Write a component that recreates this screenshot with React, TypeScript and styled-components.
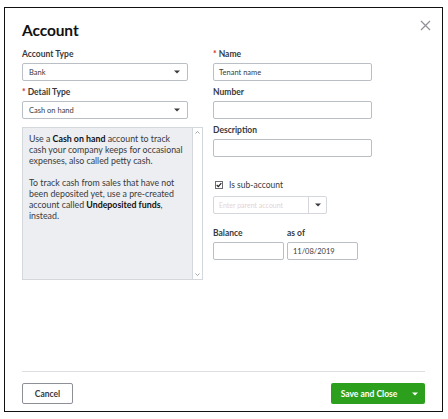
import styled, { createGlobalStyle } from 'styled-components'

const GlobalStyle = createGlobalStyle`
  html, body {
    margin: 0;
    padding: 0;
    background: #ffffff;
  }
  body {
    font-family: Lato, 'Open Sans', 'Liberation Sans', sans-serif;
    color: #393a3d;
  }
`

function Caret() {
  return (
    <svg width="6" height="4" viewBox="0 0 6 4">
      <path d="M0 0.5 H6 L3 3.5 Z" fill="currentColor" />
    </svg>
  )
}

export default function App() {
  return (
    <>
      <GlobalStyle />
      <Frame>
        <Header>
          <Title>Account</Title>
          <CloseButton aria-label="Close">
            <svg width="11" height="11" viewBox="0 0 11 11">
              <path d="M1 1 L10 10 M10 1 L1 10" stroke="#8d9096" strokeWidth="1.2" />
            </svg>
          </CloseButton>
        </Header>
        <Columns>
          <Column>
            <Field>
              <Label>Account Type</Label>
              <Select>
                <span>Bank</span>
                <Caret />
              </Select>
            </Field>
            <Field>
              <Label required>Detail Type</Label>
              <Select>
                <span>Cash on hand</span>
                <Caret />
              </Select>
            </Field>
            <InfoBox>
              <InfoText>
                <p>
                  Use a <b>Cash on hand</b> account to track cash your company keeps for
                  occasional expenses, also called petty cash.
                </p>
                <p>
                  To track cash from sales that have not been deposited yet, use a pre-created
                  account called <b>Undeposited funds</b>, instead.
                </p>
              </InfoText>
              <Scrollbar>
                <ScrollArrow>
                  <svg width="5" height="3" viewBox="0 0 5 3">
                    <path d="M0.5 2.5 L2.5 0.5 L4.5 2.5" stroke="#8d9096" fill="none" strokeWidth="0.8" />
                  </svg>
                </ScrollArrow>
                <ScrollArrow>
                  <svg width="5" height="3" viewBox="0 0 5 3">
                    <path d="M0.5 0.5 L2.5 2.5 L4.5 0.5" stroke="#8d9096" fill="none" strokeWidth="0.8" />
                  </svg>
                </ScrollArrow>
              </Scrollbar>
            </InfoBox>
          </Column>
          <Column>
            <Field>
              <Label required>Name</Label>
              <Input width={159}>Tenant name</Input>
            </Field>
            <Field>
              <Label>Number</Label>
              <Input width={159} />
            </Field>
            <Field>
              <Label>Description</Label>
              <Input width={159} />
            </Field>
            <CheckRow>
              <CheckBox>
                <svg width="7" height="6" viewBox="0 0 7 6">
                  <path d="M0.8 3 L2.7 5 L6.2 0.8" stroke="#222" fill="none" strokeWidth="1.4" />
                </svg>
              </CheckBox>
              <CheckLabel>Is sub-account</CheckLabel>
            </CheckRow>
            <Combo>
              <ComboInput>Enter parent account</ComboInput>
              <ComboButton>
                <Caret />
              </ComboButton>
            </Combo>
            <BalanceRow>
              <Field>
                <Label>Balance</Label>
                <Input width={71} />
              </Field>
              <Field>
                <Label>as of</Label>
                <Input width={71}>11/08/2019</Input>
              </Field>
            </BalanceRow>
          </Column>
        </Columns>
        <Footer>
          <CancelButton>Cancel</CancelButton>
          <SaveButton>
            <SaveLabel>Save and Close</SaveLabel>
            <SaveCaret>
              <Caret />
            </SaveCaret>
          </SaveButton>
        </Footer>
      </Frame>
    </>
  )
}

const Frame = styled.div`
  box-sizing: border-box;
  margin: 7px 5px 0 4px;
  height: 405px;
  border: 1.5px solid #111;
  padding: 13px 17px 0 17px;
  display: flex;
  flex-direction: column;
`

const Header = styled.header`
  display: flex;
  justify-content: space-between;
  align-items: flex-start;
  height: 28px;
`

const Title = styled.h1`
  margin: 0;
  font-size: 15.5px;
  line-height: 18px;
  font-weight: 700;
  color: #111;
  letter-spacing: -0.1px;
`

const CloseButton = styled.button`
  border: none;
  background: none;
  padding: 0;
  margin: -2px -6px 0 0;
  cursor: pointer;
`

const Columns = styled.div`
  display: grid;
  grid-template-columns: 181px 1fr;
  column-gap: 10px;
`

const Column = styled.div`
  display: flex;
  flex-direction: column;
`

const Field = styled.div`
  display: flex;
  flex-direction: column;
  margin-bottom: 6px;
`

const Label = styled.label<{ required?: boolean }>`
  font-size: 8.5px;
  font-weight: 700;
  color: #393a3d;
  line-height: 10px;
  margin-bottom: 4px;
  &::before {
    content: ${(p) => (p.required ? "'*'" : 'none')};
    color: #d52b1e;
    margin-right: 2px;
  }
`

const Select = styled.div`
  box-sizing: border-box;
  width: 166px;
  height: 18px;
  border: 1px solid #babec5;
  border-radius: 2px;
  padding: 0 7px 0 6px;
  display: flex;
  align-items: center;
  justify-content: space-between;
  font-size: 7.5px;
  color: #393a3d;
  svg {
    color: #393a3d;
  }
`

const InfoBox = styled.div`
  box-sizing: border-box;
  width: 181px;
  height: 153px;
  margin-top: 2px;
  border: 1px solid #d4d7dc;
  background: #eceef1;
  display: flex;
`

const InfoText = styled.div`
  flex: 1;
  padding: 5px 6px 0 6px;
  font-size: 8.8px;
  line-height: 11px;
  color: #393a3d;
  p {
    margin: 0 0 11px;
  }
  b {
    font-weight: 700;
    color: #111;
  }
`

const Scrollbar = styled.div`
  width: 9px;
  background: #ffffff;
  border-left: 1px solid #d4d7dc;
  display: flex;
  flex-direction: column;
  justify-content: space-between;
`

const ScrollArrow = styled.div`
  height: 9px;
  display: flex;
  align-items: center;
  justify-content: center;
`

const Input = styled.div<{ width: number }>`
  box-sizing: border-box;
  width: ${(p) => p.width}px;
  height: 18px;
  border: 1px solid #babec5;
  border-radius: 2px;
  padding: 0 5px;
  display: flex;
  align-items: center;
  font-size: 7.5px;
  color: #393a3d;
`

const CheckRow = styled.div`
  display: flex;
  align-items: center;
  margin: 17px 0 6px 2px;
  gap: 6px;
`

const CheckBox = styled.div`
  box-sizing: border-box;
  width: 8px;
  height: 8px;
  border: 1px solid #6b6c72;
  display: flex;
  align-items: center;
  justify-content: center;
  background: #fff;
`

const CheckLabel = styled.span`
  font-size: 8.5px;
  color: #393a3d;
`

const Combo = styled.div`
  box-sizing: border-box;
  width: 114px;
  height: 18px;
  border: 1px solid #d4d7dc;
  border-radius: 2px;
  display: flex;
  margin-bottom: 14px;
`

const ComboInput = styled.div`
  flex: 1;
  padding: 0 5px;
  display: flex;
  align-items: center;
  font-size: 7px;
  color: #e6d3d0;
`

const ComboButton = styled.div`
  width: 17px;
  border-left: 1px solid #d4d7dc;
  display: flex;
  align-items: center;
  justify-content: center;
  color: #393a3d;
`

const BalanceRow = styled.div`
  display: flex;
  gap: 3px;
`

const Footer = styled.footer`
  margin-top: auto;
  border-top: 1px solid #dcdee2;
  padding: 11px 0 0;
  height: 38px;
  box-sizing: border-box;
  display: flex;
  justify-content: space-between;
  align-items: flex-start;
  margin-bottom: 2px;
`

const CancelButton = styled.button`
  box-sizing: border-box;
  width: 51px;
  height: 21px;
  border: 1px solid #8d9096;
  border-radius: 2px;
  background: #fff;
  font-family: inherit;
  font-size: 8.5px;
  font-weight: 700;
  color: #393a3d;
  padding: 0;
`

const SaveButton = styled.button`
  box-sizing: border-box;
  width: 94px;
  height: 21px;
  border: none;
  border-radius: 2px;
  background: #2ca01c;
  color: #fff;
  font-family: inherit;
  display: flex;
  align-items: center;
  padding: 0;
`

const SaveLabel = styled.span`
  flex: 1;
  font-size: 8.5px;
  font-weight: 700;
  text-align: center;
  padding-left: 2px;
`

const SaveCaret = styled.span`
  width: 20px;
  display: flex;
  align-items: center;
  justify-content: center;
  color: #fff;
`
